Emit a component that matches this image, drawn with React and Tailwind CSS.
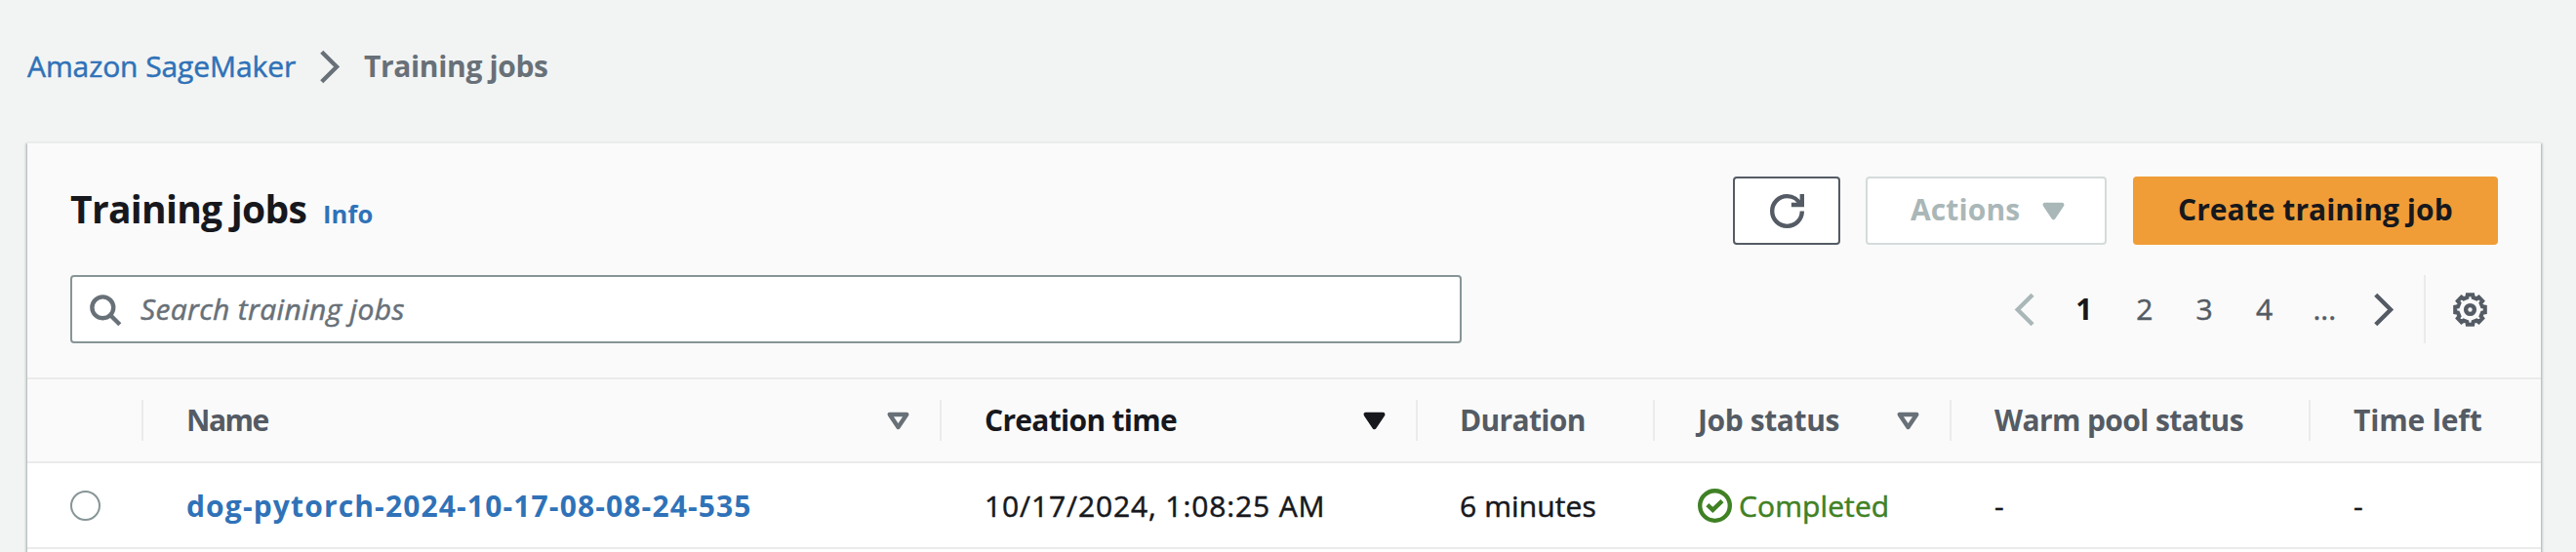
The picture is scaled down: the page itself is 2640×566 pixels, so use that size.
import React from 'react';

function Icon({ className = '', children }) {
  return (
    <svg
      viewBox="0 0 16 16"
      className={`h-[35px] w-[35px] shrink-0 overflow-visible ${className}`}
      fill="none"
      stroke="currentColor"
      strokeWidth="2"
    >
      {children}
    </svg>
  );
}

const ChevronRight = (p) => (
  <Icon {...p}>
    <path d="m4 1 7 7-7 7" />
  </Icon>
);

const ChevronLeft = (p) => (
  <Icon {...p}>
    <path d="M11 1 4 8l7 7" />
  </Icon>
);

const Caret = ({ filled, className }) => (
  <Icon className={className}>
    <path d="M4 5h8l-4 6-4-6z" strokeLinejoin="round" fill={filled ? 'currentColor' : 'none'} />
  </Icon>
);

const Refresh = (p) => (
  <Icon {...p}>
    <path d="M10 5h5V0" />
    <path d="M15 8a6.957 6.957 0 0 1-7 7 6.957 6.957 0 0 1-7-7 6.957 6.957 0 0 1 7-7 6.87 6.87 0 0 1 6.3 4" />
  </Icon>
);

const Search = (p) => (
  <Icon {...p}>
    <circle cx="7" cy="7" r="5" />
    <path d="m15 15-4.5-4.5" />
  </Icon>
);

const StatusCheck = (p) => (
  <Icon {...p}>
    <circle cx="8" cy="8" r="7" />
    <path d="M4.5 7.6 7 10l4.4-4.2" />
  </Icon>
);

// Outline of an eight-toothed gear centred on (8, 8).
const gearPoints = Array.from({ length: 8 }, (_, i) =>
  [
    [5.9, -14],
    [7.1, -10],
    [7.1, 10],
    [5.9, 14],
  ].map(([r, offset]) => {
    const a = ((i * 45 + offset) * Math.PI) / 180;
    return `${(8 + r * Math.cos(a)).toFixed(2)},${(8 + r * Math.sin(a)).toFixed(2)}`;
  }),
)
  .flat()
  .join(' ');

const Gear = (p) => (
  <Icon {...p}>
    <polygon points={gearPoints} strokeWidth="1.85" />
    <circle cx="8" cy="8" r="2" />
  </Icon>
);

const columns = [
  { label: 'Name', text: 'tracking-[-1.5px]', sort: 'none' },
  { label: 'Creation time', text: 'tracking-[-0.7px]', sort: 'desc' },
  { label: 'Duration', text: 'tracking-[-0.67px] -ml-px' },
  { label: 'Job status', text: 'tracking-[-0.4px]', sort: 'none' },
  { label: 'Warm pool status', text: 'tracking-[-0.61px]' },
  { label: 'Time left', text: 'tracking-[-0.15px]', last: true },
];

const GRID = 'grid grid-cols-[119px_818px_488px_243px_304px_368px_236px]';

// Slightly heavier regular weight for body text.
const BODY = '[-webkit-text-stroke:0.5px_currentColor]';

function HeaderCell({ label, text, sort, last }) {
  return (
    <div
      className={`flex h-[42px] items-center justify-between whitespace-nowrap pl-11 pr-[25px] ${
        last ? '' : 'border-r-2 border-[#ebebeb]'
      } ${sort === 'desc' ? 'text-[#17181d]' : 'text-[#545b64]'}`}
    >
      <span className={text}>{label}</span>
      {sort === 'none' && <Caret className="text-[#687078]" />}
      {sort === 'desc' && <Caret filled />}
    </div>
  );
}

export default function App() {
  return (
    <div className="flex h-[566px] w-[2640px] flex-col overflow-hidden bg-[#f2f4f3] font-['Open_Sans','Noto_Sans',sans-serif] text-[30px] leading-[42px] text-[#17181d]">
      <nav className="flex h-[145px] shrink-0 items-start pl-7 pt-[47px]">
        <a className={`w-[293px] whitespace-nowrap tracking-[-0.08px] text-[#2f72b8] ${BODY}`}>Amazon SageMaker</a>
        <ChevronRight className="mt-1 text-[#687078]" />
        <span className="ml-[17px] font-bold tracking-[-0.35px] text-[#687078]">Training jobs</span>
      </nav>

      <section className="mx-7 flex h-[460px] w-[2576px] shrink-0 flex-col border-t-2 border-[#eaecec] bg-white shadow-[0_2px_2px_rgba(0,28,36,0.3),2px_2px_2px_rgba(0,28,36,0.15),-2px_2px_2px_rgba(0,28,36,0.15)]">
        <header className="flex h-[242px] shrink-0 flex-col border-b-2 border-[#ebebeb] bg-[#fafafa] pl-11 pr-11 pt-[34px]">
          <div className="flex h-[70px] items-center justify-between">
            <div className="flex items-baseline pb-[4px]">
              <h1 className="w-[259px] whitespace-nowrap text-[39px] font-bold leading-[50px] tracking-[-0.69px]">
                Training jobs
              </h1>
              <a className="text-[25.5px] font-bold tracking-[0.18px] text-[#2f72b8]">Info</a>
            </div>
            <div className="flex h-[70px]">
              <button className="flex w-[110px] items-center justify-center rounded border-2 border-[#545b64] bg-white text-[#545b64]">
                <Refresh />
              </button>
              <button className="ml-[26px] flex w-[247px] items-center rounded border-2 border-[#d5dbdb] bg-white pl-11 font-bold text-[#aab7b8]">
                <span className="w-[129px] pb-[2px] text-left tracking-[0.12px]">Actions</span>
                <Caret filled />
              </button>
              <button className="ml-[27px] flex w-[374px] items-center rounded bg-[#f09d38] pb-[2px] pl-[46px] font-bold tracking-[0.03px]">
                Create training job
              </button>
            </div>
          </div>

          <div className="mt-[31px] flex h-[70px]">
            <div className="flex w-[1426px] items-center rounded border-2 border-[#879596] bg-white pl-4 text-[#687078]">
              <Search />
              <span className={`ml-[19px] italic tracking-[0.33px] ${BODY}`}>Search training jobs</span>
            </div>
            <div className={`ml-[548px] grid w-[428px] grid-cols-7 place-items-center text-[#545b64] ${BODY}`}>
              <ChevronLeft className="text-[#aab7b8]" />
              <span className="pr-1 font-bold text-[#17181d] [-webkit-text-stroke:0px]">1</span>
              <span className="pr-[2px]">2</span>
              <span className="pr-[2px]">3</span>
              <span className="pr-[1px]">4</span>
              <span>...</span>
              <ChevronRight />
            </div>
            <div className="ml-[10px] flex items-center border-l-2 border-[#ebebeb] pl-7 text-[#545b64]">
              <Gear />
            </div>
          </div>
        </header>

        <div className={`${GRID} h-[86px] shrink-0 items-center border-b-2 border-[#ebebeb] bg-[#fafafa] font-bold`}>
          <div className="h-[42px] border-r-2 border-[#ebebeb]" />
          {columns.map((c) => (
            <HeaderCell key={c.label} {...c} />
          ))}
        </div>

        <div className={`${GRID} h-[88px] shrink-0 items-center whitespace-nowrap border-b-2 border-[#ebebeb]`}>
          <div className="pl-11">
            <div className="h-[31px] w-[31px] rounded-full border-2 border-[#879596]" />
          </div>
          <a className="pl-11 pt-[2px] font-bold tracking-[1.14px] text-[#2f72b8]">
            dog-pytorch-2024-10-17-08-08-24-535
          </a>
          <span className={`pl-11 pt-[2px] tracking-[0.88px] ${BODY}`}>10/17/2024, 1:08:25 AM</span>
          <span className={`pl-[43px] pt-[2px] tracking-[0.12px] ${BODY}`}>6 minutes</span>
          <span className="flex items-center pl-11 text-[#3f8124]">
            <StatusCheck />
            <span className={`ml-[7px] pt-[2px] tracking-[0.1px] ${BODY}`}>Completed</span>
          </span>
          <span className={`pl-11 pt-[2px] ${BODY}`}>-</span>
          <span className={`pl-11 pt-[2px] ${BODY}`}>-</span>
        </div>
      </section>
    </div>
  );
}
